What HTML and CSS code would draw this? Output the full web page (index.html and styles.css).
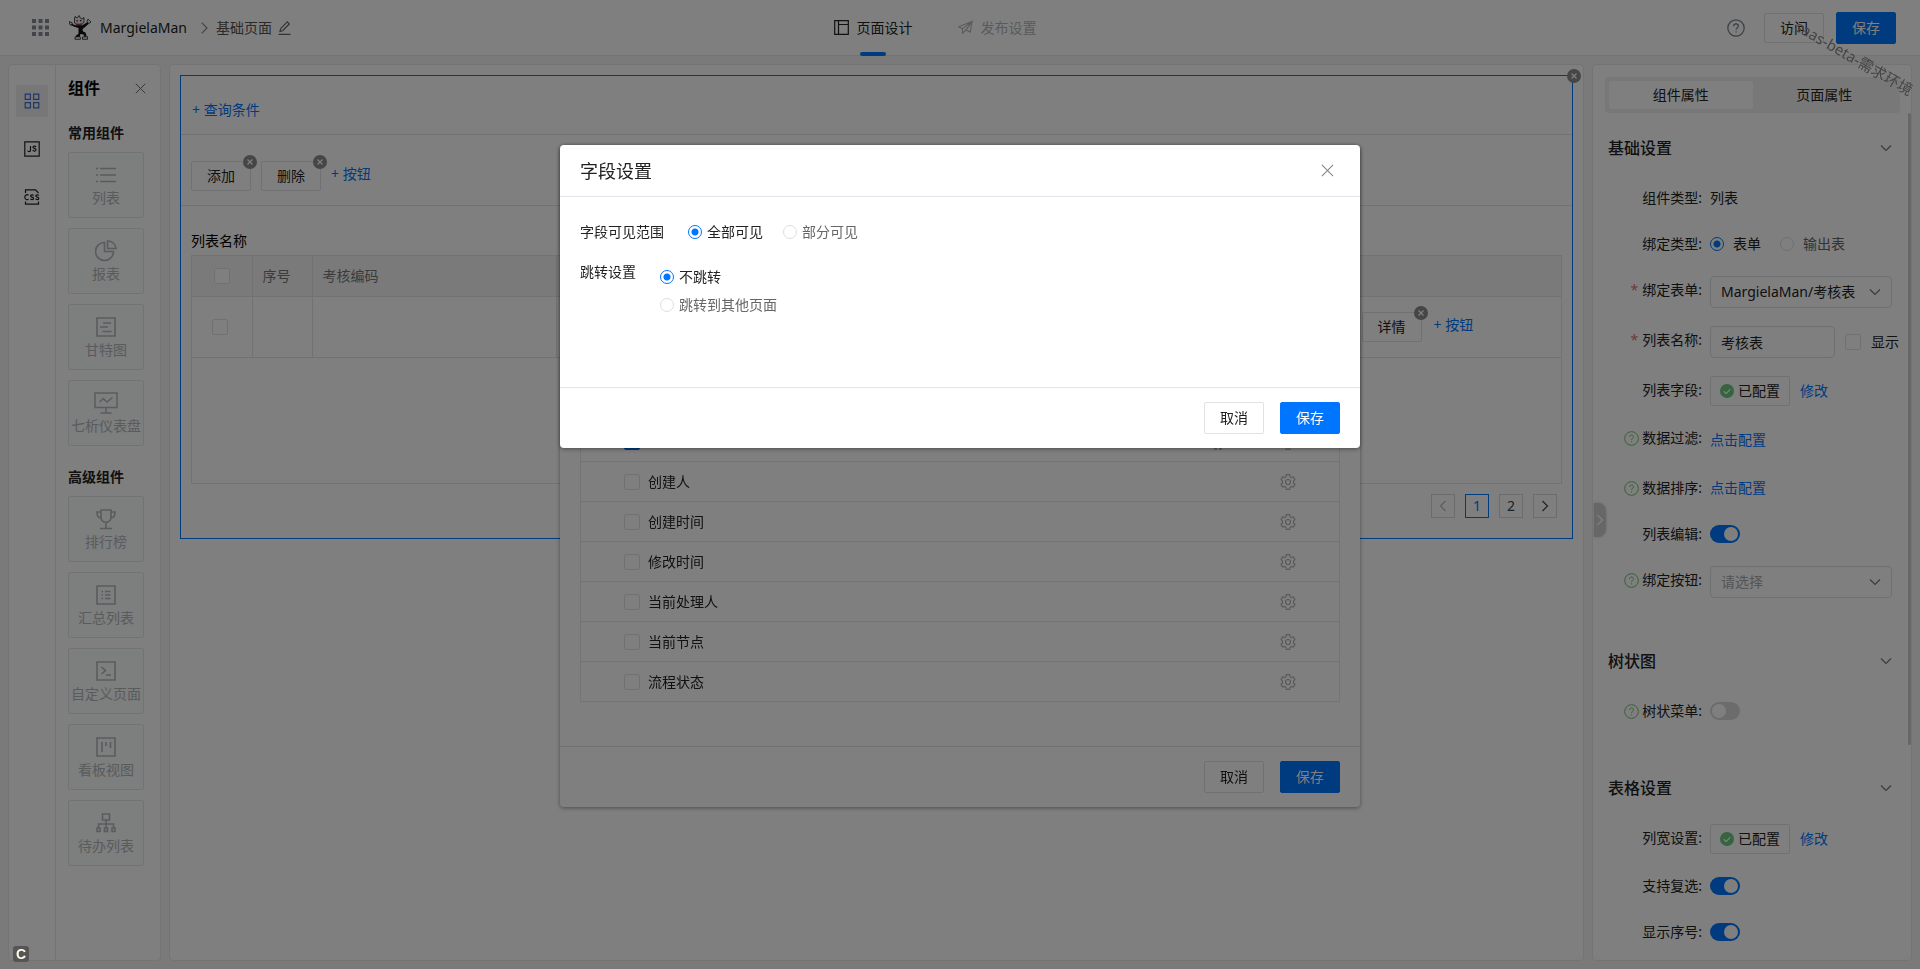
FILE: index.html
```html
<!DOCTYPE html>
<html lang="zh-CN">
<head>
<meta charset="utf-8">
<title>页面设计</title>
<link rel="stylesheet" href="styles.css">
</head>
<body>
<svg class="defs" aria-hidden="true">
  <symbol id="i-x" viewBox="0 0 14 14"><path d="M1 1l12 12M13 1L1 13"/></symbol>
  <symbol id="i-down" viewBox="0 0 12 12"><path d="M1 3.500l5 5 5-5"/></symbol>
  <symbol id="i-right" viewBox="0 0 12 12"><path d="M3.500 1l5 5-5 5"/></symbol>
  <symbol id="i-left" viewBox="0 0 12 12"><path d="M8.500 1l-5 5 5 5"/></symbol>
  <symbol id="i-badge" viewBox="0 0 14 14"><circle class="disc" cx="7" cy="7" r="7"/><path class="mark" d="M4.500 4.500l5 5M9.500 4.500l-5 5"/></symbol>
  <symbol id="i-help" viewBox="0 0 18 18"><circle cx="9" cy="9" r="8.200"/><path d="M6.600 7.200c0-1.400 1-2.400 2.400-2.400s2.400.9 2.400 2.200c0 1.700-2.300 1.900-2.300 3.700M9.100 12.200v1.400"/></symbol>
  <symbol id="i-ok" viewBox="0 0 14 14"><circle class="disc" cx="7" cy="7" r="7"/><path class="mark" d="M3.700 7.300l2.400 2.300 4.200-4.500"/></symbol>
  <symbol id="i-gear" viewBox="0 0 16 16"><path d="M6.400.7h3.200l.5 2 1.300.8 2-.6 1.600 2.800-1.500 1.400v1.800l1.500 1.400-1.600 2.800-2-.6-1.300.8-.5 2H6.400l-.5-2-1.300-.8-2 .6L1 10.300l1.500-1.400V7.100L1 5.700l1.600-2.800 2 .6 1.300-.8z"/><circle cx="8" cy="8" r="2.500"/></symbol>
</svg>

<div class="app">
  <header class="topbar">
    <div class="crumbs">
      <svg class="apps" viewBox="0 0 17 17"><path d="M0 0h4v4H0zM6.500 0h4v4h-4zM13 0h4v4h-4zM0 6.500h4v4H0zM6.500 6.500h4v4h-4zM13 6.500h4v4h-4zM0 13h4v4H0zM6.500 13h4v4h-4zM13 13h4v4h-4z"/></svg>
      <svg class="logo" viewBox="0 0 22 25"><path d="M5.500 4L6 1.500 8 3l2-2.500 1.500 2.700L13 4l2-1.500L15 7l-2.500 3-4 .3L5.500 8z" fill="#e8e8e8" stroke="#222" stroke-width=".8"/><path d="M7.500 5.200h1.300v1.300H7.500zM11 5h1.300v1.300H11z" fill="#111"/><path d="M7 8c2 1.200 4.500 1 6-.5l-1 2.300-3.500.4z" fill="#a43a2a"/><path d="M2 8.500l4.500 1.800h7L18.500 7l1.500 1.500-5 4.500-1.500 1 .5 2.500 2.500 1 1 3.500-2 1-1-2.500-3-.5-1 3H6.500l1-2 2-1V13L6 12l-4.500-2z" fill="#111"/><path d="M.5 6.500l3 1.500-1.500 2.200L.3 9zM18 6.500l1-2.500 1.500 1.500L22 7l-2.500 1.700zM6 22l5-.6.5 2.900H6zM13.500 22l5-.4v2.700h-5z" fill="#e8e8e8" stroke="#222" stroke-width=".8"/></svg>
      <span class="brand">MargielaMan</span>
      <svg class="line crumb-sep" viewBox="0 0 7 12"><path d="M.7.7L6 6 .7 11.300"/></svg>
      <span class="page-name">基础页面</span>
      <svg class="line pen" viewBox="0 0 13 14"><path d="M.5 13.300h12M2 10.500l.6-2.800L9.300.9l2 2-6.700 6.800z"/></svg>
    </div>
    <nav class="modes">
      <a class="mode mode-on" href="#"><svg class="line" viewBox="0 0 15 15"><path d="M.7.7h13.600v13.600H.7zM4.500.7v13.600M4.500 4.500h9.800"/></svg>页面设计</a>
      <a class="mode" href="#"><svg class="line" viewBox="0 0 16 15"><path d="M15 1L.8 6.800l4 2.200L15 1l-2 11.500-4.500-2.300M4.800 9v4.500l3.700-3.300L15 1"/></svg>发布设置</a>
    </nav>
    <div class="top-actions">
      <svg class="line help-lg"><use href="#i-help"/></svg>
      <button class="btn btn-sm">访问</button>
      <button class="btn btn-primary">保存</button>
    </div>
  </header>

  <div class="workspace">
    <aside class="palette">
      <div class="rail">
        <button class="rail-btn rail-on" aria-label="组件"><svg class="line" viewBox="0 0 16 16"><path d="M1.200 1.200h5.200v5.200H1.200zM9.600 1.200h5.200v5.200H9.600zM1.200 9.600h5.200v5.200H1.200zM9.600 9.600h5.200v5.200H9.600z"/></svg></button>
        <button class="rail-btn" aria-label="JS"><svg class="line" viewBox="0 0 16 16"><path d="M.8.800h14.400v14.400H.8zM6.500 5v4.300c0 1.700-2.500 1.700-2.800.2M12 6c-.5-1.200-3-1.200-3 .2C9 7.700 12 7 12 8.600c0 1.900-2.700 1.900-3.200.4"/></svg></button>
        <button class="rail-btn" aria-label="CSS"><svg class="line" viewBox="0 0 16 16"><path d="M1.500 4V.8h10L14.500 4M1.500 12.500v2.700h13v-2.700M4.500 6.200C3.500 5.300.800 5.500.8 8.200s2.700 2.900 3.700 2M9.600 6.500c-.6-1-3-.9-3 .4C6.600 8.500 9.600 7.800 9.600 9.500c0 1.400-2.600 1.400-3.200.3M14.800 6.500c-.6-1-3-.9-3 .4 0 1.600 3 .9 3 2.600 0 1.400-2.600 1.400-3.200.3"/></svg></button>
      </div>
      <div class="parts">
        <div class="parts-head"><h2>组件</h2><button class="icon-btn" aria-label="关闭"><svg class="line x-sm"><use href="#i-x"/></svg></button></div>
        <h3>常用组件</h3>
        <div class="cards">
          <div class="card"><svg class="line" viewBox="0 0 22 22"><path d="M5 4.500h16M5 11h16M5 17.500h16M1 4.500h2M1 11h2M1 17.500h2"/></svg>列表</div>
          <div class="card"><svg class="line" viewBox="0 0 22 22"><path d="M9.500 2.500a9 9 0 1 0 9 9h-9zM12.500 1v7.500H21A8 8 0 0 0 12.500 1z"/></svg>报表</div>
          <div class="card"><svg class="line" viewBox="0 0 22 22"><path d="M2 2h18v18H2zM8 7h8M5 11h8M7.500 15.500h9"/></svg>甘特图</div>
          <div class="card"><svg class="line wide" viewBox="0 0 26 24"><path d="M1 1h24v16H1zM13 17v5M7 23h12M6 11l4-4 4 4 6-5"/></svg>七析仪表盘</div>
        </div>
        <h3>高级组件</h3>
        <div class="cards">
          <div class="card"><svg class="line" viewBox="0 0 22 22"><path d="M6 2h10v7c0 7-10 7-10 0zM6 4H2c0 4 1 6 4 6M16 4h4c0 4-1 6-4 6M11 14.500V20M5 20.500h12"/></svg>排行榜</div>
          <div class="card"><svg class="line" viewBox="0 0 22 22"><path d="M2 2h18v18H2zM6.500 7.500H8M10 7.500h5.500M6.500 11H8M10 11h5.500M6.500 14.500H8M10 14.500h5.500"/></svg>汇总列表</div>
          <div class="card"><svg class="line" viewBox="0 0 22 22"><path d="M2 2h18v18H2zM6.500 7l4 3.500-4 3.500M11 15h5"/></svg>自定义页面</div>
          <div class="card"><svg class="line" viewBox="0 0 22 22"><path d="M2 2h18v18H2zM7 6v10M11 6v4M15.500 6v6"/></svg>看板视图</div>
          <div class="card"><svg class="line" viewBox="0 0 22 22"><path d="M7.500 2h7v6h-7zM11 8v4M3.500 16v-4h15v4M11 12v4M2 16h3v3.500H2zM9.500 16h3v3.500h-3zM17 16h3v3.500h-3z"/></svg>待办列表</div>
        </div>
      </div>
    </aside>

    <main class="canvas">
      <section class="block">
        <svg class="badge badge-block"><use href="#i-badge"/></svg>
        <div class="query"><a class="add" href="#">+ 查询条件</a></div>
        <div class="tools">
          <div class="tool"><button class="btn btn-sm">添加</button><svg class="badge"><use href="#i-badge"/></svg></div>
          <div class="tool"><button class="btn btn-sm">删除</button><svg class="badge"><use href="#i-badge"/></svg></div>
          <a class="add" href="#">+ 按钮</a>
        </div>
        <div class="list">
          <div class="list-title">列表名称</div>
          <div class="grid-box">
            <table>
              <colgroup><col class="c-sm"><col class="c-sm"><col class="c-md"><col><col><col><col class="c-act"></colgroup>
              <thead><tr><th class="pick"><input type="checkbox" aria-label="全选"></th><th>序号</th><th>考核编码</th><th></th><th></th><th></th><th></th></tr></thead>
              <tbody><tr><td class="pick"><input type="checkbox" aria-label="选择行"></td><td></td><td></td><td></td><td></td><td></td>
                <td><div class="row-tools"><div class="tool"><button class="btn btn-sm">详情</button><svg class="badge"><use href="#i-badge"/></svg></div><a class="add" href="#">+ 按钮</a></div></td></tr></tbody>
            </table>
          </div>
          <div class="pager">
            <button class="pg pg-off" aria-label="上一页"><svg class="line"><use href="#i-left"/></svg></button>
            <button class="pg pg-on">1</button>
            <button class="pg">2</button>
            <button class="pg" aria-label="下一页"><svg class="line"><use href="#i-right"/></svg></button>
          </div>
        </div>
      </section>
    </main>

    <aside class="props">
      <button class="collapse" aria-label="收起"><svg class="line"><use href="#i-right"/></svg></button>
      <div class="seg"><button class="seg-btn seg-on">组件属性</button><button class="seg-btn">页面属性</button></div>
      <div class="props-body">
        <section class="group">
          <h2>基础设置<svg class="line chev"><use href="#i-down"/></svg></h2>
          <div class="field"><span class="label">组件类型:</span><span class="value">列表</span></div>
          <div class="field"><span class="label">绑定类型:</span><span class="value radios"><label><input type="radio" name="bind" checked>表单</label><label class="off"><input type="radio" name="bind">输出表</label></span></div>
          <div class="field tall"><label class="label" for="form"><b class="req">*</b>绑定表单:</label><span class="value"><span class="select"><select id="form"><option>MargielaMan/考核表</option></select><svg class="line chev"><use href="#i-down"/></svg></span></span></div>
          <div class="field tall"><label class="label" for="name"><b class="req">*</b>列表名称:</label><span class="value"><input class="text" id="name" type="text" value="考核表"><label class="show"><input type="checkbox">显示</label></span></div>
          <div class="field mid"><span class="label">列表字段:</span><span class="value"><button class="btn btn-sm done"><svg class="ok"><use href="#i-ok"/></svg>已配置</button><a href="#">修改</a></span></div>
          <div class="field tall"><span class="label"><svg class="line tip"><use href="#i-help"/></svg>数据过滤:</span><span class="value"><a href="#">点击配置</a></span></div>
          <div class="field"><span class="label"><svg class="line tip"><use href="#i-help"/></svg>数据排序:</span><span class="value"><a href="#">点击配置</a></span></div>
          <div class="field"><label class="label" for="edit">列表编辑:</label><span class="value"><input class="switch" id="edit" type="checkbox" checked></span></div>
          <div class="field tall"><label class="label" for="bindbtn"><svg class="line tip"><use href="#i-help"/></svg>绑定按钮:</label><span class="value"><span class="select empty"><select id="bindbtn"><option>请选择</option></select><svg class="line chev"><use href="#i-down"/></svg></span></span></div>
        </section>
        <section class="group">
          <h2>树状图<svg class="line chev"><use href="#i-down"/></svg></h2>
          <div class="field"><label class="label" for="tree"><svg class="line tip"><use href="#i-help"/></svg>树状菜单:</label><span class="value"><input class="switch" id="tree" type="checkbox"></span></div>
        </section>
        <section class="group">
          <h2>表格设置<svg class="line chev"><use href="#i-down"/></svg></h2>
          <div class="field mid"><span class="label">列宽设置:</span><span class="value"><button class="btn btn-sm done"><svg class="ok"><use href="#i-ok"/></svg>已配置</button><a href="#">修改</a></span></div>
          <div class="field"><label class="label" for="multi">支持复选:</label><span class="value"><input class="switch" id="multi" type="checkbox" checked></span></div>
          <div class="field"><label class="label" for="seq">显示序号:</label><span class="value"><input class="switch" id="seq" type="checkbox" checked></span></div>
        </section>
      </div>
      <div class="thumb"></div>
    </aside>
  </div>
</div>

<div class="watermark">saas-beta-需求环境</div>

<div class="layer">
  <div class="dialog dialog-fields" role="dialog" aria-label="列表字段">
    <div class="dialog-body">
      <ul class="fields">
        <li><input type="checkbox" checked aria-label="已选字段"><svg class="grip" viewBox="0 0 8 16"><path d="M0 1h3v3H0zM5 1h3v3H5zM0 7h3v3H0zM5 7h3v3H5zM0 13h3v3H0zM5 13h3v3H5z"/></svg><svg class="line gear"><use href="#i-gear"/></svg></li>
        <li><label><input type="checkbox">创建人</label><svg class="line gear"><use href="#i-gear"/></svg></li>
        <li><label><input type="checkbox">创建时间</label><svg class="line gear"><use href="#i-gear"/></svg></li>
        <li><label><input type="checkbox">修改时间</label><svg class="line gear"><use href="#i-gear"/></svg></li>
        <li><label><input type="checkbox">当前处理人</label><svg class="line gear"><use href="#i-gear"/></svg></li>
        <li><label><input type="checkbox">当前节点</label><svg class="line gear"><use href="#i-gear"/></svg></li>
        <li><label><input type="checkbox">流程状态</label><svg class="line gear"><use href="#i-gear"/></svg></li>
      </ul>
    </div>
    <div class="dialog-foot"><button class="btn">取消</button><button class="btn btn-primary">保存</button></div>
  </div>
</div>

<div class="layer mask">
  <div class="dialog" role="dialog" aria-labelledby="dlg">
    <div class="dialog-head"><h1 id="dlg">字段设置</h1><button class="icon-btn" aria-label="关闭"><svg class="line x-lg"><use href="#i-x"/></svg></button></div>
    <div class="dialog-body form">
      <div class="form-row"><span>字段可见范围</span><div class="opts"><label><input type="radio" name="scope" checked>全部可见</label><label class="off"><input type="radio" name="scope">部分可见</label></div></div>
      <div class="form-row"><span>跳转设置</span><div class="opts opts-col"><label><input type="radio" name="jump" checked>不跳转</label><label class="off"><input type="radio" name="jump">跳转到其他页面</label></div></div>
    </div>
    <div class="dialog-foot"><button class="btn">取消</button><button class="btn btn-primary">保存</button></div>
  </div>
</div>
<div class="corner">C</div>
</body>
</html>
```

FILE: styles.css
```css
* { box-sizing: border-box; }
body { margin: 0; overflow: hidden; background: #f5f5f5; color: #222; font: 14px/22px "Noto Sans", "Noto Sans CJK SC", sans-serif; }
h1, h2, h3, ul { margin: 0; padding: 0; font-weight: 400; list-style: none; }
a { color: #0075ff; text-decoration: none; }
button, input, select { font: inherit; color: inherit; margin: 0; }
svg { flex: none; }
.defs { position: absolute; width: 0; height: 0; }
.line { fill: none; stroke: currentColor; stroke-width: 1.2; }
label { display: flex; align-items: center; }

input[type="checkbox"]:not(.switch) { appearance: none; flex: none; width: 16px; height: 16px; border: 1px solid #e1e2e6; border-radius: 2px; background: #fff; }
input[type="checkbox"]:not(.switch):checked { background: #0075ff; border-color: #0075ff; }
input[type="radio"] { appearance: none; flex: none; width: 14px; height: 14px; border: 1px solid #dcdee2; border-radius: 50%; background: #fff; }
input[type="radio"]:checked { border-color: #0075ff; background: radial-gradient(circle, #0075ff 3px, #fff 4px); }
.off { color: #666; }

.btn { min-width: 60px; height: 32px; padding: 0 15px; border: 1px solid #e1e2e6; border-radius: 2px; background: #fff; line-height: 20px; white-space: nowrap; }
.btn-sm { height: 30px; }
.btn-primary { background: #0075ff; border-color: #0075ff; color: #fff; }
.icon-btn { display: flex; padding: 0; border: 0; background: none; color: #666; }
.x-sm { width: 11px; height: 11px; }
.x-lg { width: 13px; height: 13px; color: #888; }
.badge { position: absolute; top: -6px; right: -6px; width: 14px; height: 14px; }
.badge-block { top: -7px; right: -9px; }
.disc { fill: #8c8c8c; }
.mark { fill: none; stroke: #fff; stroke-width: 1.2; }

.app { display: flex; flex-direction: column; height: 100vh; }
.topbar { display: grid; grid-template-columns: 1fr auto 1fr; flex: none; height: 56px; padding: 0 24px 0 32px; background: #fff; border-bottom: 1px solid #e6e6e6; }
.crumbs, .top-actions { display: flex; align-items: center; }
.apps { width: 17px; height: 17px; fill: #858a92; margin-right: 20px; }
.logo { width: 22px; height: 25px; margin-right: 9px; }
.crumb-sep { width: 7px; height: 12px; margin: 0 8px 0 14px; color: #888; }
.page-name { color: #555; }
.pen { width: 13px; height: 14px; margin-left: 6px; color: #666; }
.modes { display: flex; gap: 45px; margin-right: 58px; }
.mode { position: relative; display: flex; align-items: center; gap: 8px; color: #b4b6ba; }
.mode svg { width: 15px; height: 15px; }
.mode-on { color: #222; }
.mode-on::after { content: ""; position: absolute; left: 50%; bottom: -1px; width: 26px; height: 4px; margin-left: -13px; border-radius: 2px; background: #0075ff; }
.top-actions { justify-content: flex-end; }
.help-lg { width: 18px; height: 18px; margin-right: 19px; color: #777e88; }
.top-actions .btn-primary { margin-left: 12px; }

.workspace { display: flex; flex: 1; min-height: 0; gap: 8px; padding: 8px; }
.palette { display: flex; flex: none; width: 153px; border: 1px solid #e8e8e8; border-radius: 4px; background: #fff; }
.rail { display: flex; flex-direction: column; align-items: center; gap: 16px; width: 47px; padding-top: 20px; border-right: 1px solid #e8e8e8; }
.rail-btn { display: flex; align-items: center; justify-content: center; width: 32px; height: 32px; padding: 0; border: 0; border-radius: 2px; background: none; }
.rail-btn svg { width: 16px; height: 16px; }
.rail-on { background: #efefef; color: #3f6fd8; }
.parts { flex: 1; padding: 11px 14px 0 12px; }
.parts-head { display: flex; align-items: center; justify-content: space-between; height: 24px; }
.parts h2 { font-size: 16px; font-weight: 700; color: #000; }
.parts h3 { margin: 20px 0 8px; font-size: 14px; font-weight: 700; }
.parts-head + h3 { margin-top: 22px; }
.cards { display: grid; gap: 10px; }
.card { display: flex; flex-direction: column; align-items: center; justify-content: center; width: 76px; height: 66px; padding-top: 2px; border: 1px solid #e4e6e8; border-radius: 2px; background: #fafcfc; color: #b4b6ba; white-space: nowrap; }
.card svg { width: 22px; height: 22px; stroke-width: 1.6; margin-bottom: 1px; }
.card .wide { width: 26px; }

.canvas { flex: 1; min-width: 0; padding: 10px; border: 1px solid #e8e8e8; border-radius: 4px; background: #fff; }
.block { position: relative; border: 1px solid #0075ff; }
.query { padding: 23px 11px 13px; border-bottom: 1px solid #e4e4e4; }
.tools { display: flex; gap: 10px; height: 71px; padding: 26px 10px 0; border-bottom: 1px solid #e4e4e4; }
.tool { position: relative; }
.tools .add { line-height: 26px; }
.list { padding: 24px 10px 20px; }
.list-title { margin-bottom: 3px; color: #000; }
.grid-box { height: 229px; border: 1px solid #e4e4e4; }
table { width: 100%; border-collapse: collapse; table-layout: fixed; }
.c-sm { width: 60px; }
.c-md { width: 244px; }
.c-act { width: 210px; }
th, td { padding: 0 10px; border-right: 1px solid #e4e4ea; border-bottom: 1px solid #e4e4ea; text-align: left; font-weight: 400; }
th:last-child, td:last-child { border-right: 0; }
th { height: 40px; background: #f5f5f5; color: #777; }
td { height: 61px; }
.pick { text-align: center; line-height: 0; }
td.pick { padding-right: 14px; }
.row-tools { display: flex; gap: 12px; }
.row-tools .add { line-height: 26px; }
.pager { display: flex; justify-content: flex-end; gap: 10px; padding: 10px 5px 0; }
.pg { display: flex; align-items: center; justify-content: center; width: 24px; height: 24px; padding: 0; border: 1px solid #d9d9d9; background: #fff; color: #444; }
.pg svg { width: 12px; height: 12px; }
.pg-on { border-color: #0075ff; color: #0075ff; }
.pg-off { color: #bbb; }

.props { position: relative; flex: none; width: 320px; padding: 12px 11px 0 12px; border: 1px solid #e8e8e8; border-radius: 4px; background: #fff; overflow: hidden; }
.collapse { position: absolute; left: 1px; top: 438px; display: flex; align-items: center; justify-content: flex-end; width: 12px; height: 34px; padding: 0; border: 0; border-radius: 0 8px 8px 0; background: #cdced2; color: #fff; box-shadow: 0 0 3px #ccc; }
.collapse svg { width: 12px; height: 12px; }
.thumb { position: absolute; top: 48px; right: 0; width: 3px; height: 632px; border-radius: 2px; background: #cecece; }
.seg { display: flex; padding: 4px; border-radius: 4px; background: #f0f0f0; }
.seg-btn { flex: 1; height: 28px; padding: 0; border: 0; border-radius: 3px; background: none; }
.seg-on { background: #fff; }
.props-body { padding: 22px 8px 0 3px; }
.group { display: grid; grid-template-columns: minmax(0, 1fr); gap: 14px; margin-bottom: 48px; }
.group h2 { display: flex; align-items: center; justify-content: space-between; height: 26px; margin-bottom: 7px; font-size: 16px; font-weight: 500; }
.chev { width: 12px; height: 12px; color: #777; }
.field { display: flex; gap: 8px; min-height: 32px; }
.mid { min-height: 34px; }
.tall { min-height: 36px; }
.label { display: flex; flex: none; align-items: center; justify-content: flex-end; width: 94px; height: 32px; }
.value { display: flex; flex: 1; align-items: center; gap: 10px; min-width: 0; white-space: nowrap; }
.req { margin-right: 4px; font-weight: 400; color: #e57373; }
.tip { width: 15px; height: 15px; margin-right: 3px; color: #6cc070; }
.radios { gap: 19px; }
.radios label { gap: 9px; }
.select { position: relative; width: 182px; }
.select select { appearance: none; width: 100%; height: 32px; padding: 0 28px 0 10px; border: 1px solid #dcdee2; border-radius: 4px; background: #fff; }
.select .chev { position: absolute; right: 11px; top: 10px; pointer-events: none; }
.empty select { color: #aaa; }
.text { flex: none; width: 125px; height: 32px; padding: 0 10px; border: 1px solid #dcdee2; border-radius: 4px; }
.show { gap: 10px; }
.done { display: flex; align-items: center; gap: 4px; width: 80px; padding: 0 9px; }
.ok { width: 14px; height: 14px; }
#i-ok .disc { fill: #6cc880; }
.switch { position: relative; appearance: none; width: 30px; height: 18px; border-radius: 9px; background: #d8d8d8; }
.switch::after { content: ""; position: absolute; left: 2px; top: 2px; width: 14px; height: 14px; border-radius: 50%; background: #fff; }
.switch:checked { background: #0075ff; }
.switch:checked::after { left: 14px; }

.watermark { position: fixed; right: -2px; top: 47px; width: 134px; font-size: 15px; color: #8a8a8a; white-space: nowrap; transform: rotate(30deg); }

.layer { position: fixed; inset: 0; display: flex; justify-content: center; align-items: flex-start; padding-top: 145px; }
.mask { background: rgba(0, 0, 0, .5); }
.dialog { width: 800px; border-radius: 4px; background: #fff; box-shadow: 0 1px 4px rgba(0, 0, 0, .4); }
.dialog-head { display: flex; align-items: center; justify-content: space-between; height: 52px; padding: 0 26px 0 20px; border-bottom: 1px solid #e4e4ea; }
.dialog-head h1 { font-size: 18px; line-height: 26px; color: #222; }
.dialog-foot { display: flex; justify-content: flex-end; gap: 16px; padding: 14px 20px; border-top: 1px solid #e4e4ea; }
.form { display: grid; align-content: start; gap: 18px; min-height: 190px; padding: 24px 20px; }
.form-row { display: flex; gap: 24px; }
.opts { display: flex; gap: 20px; }
.opts label { gap: 5px; }
.opts-col { flex-direction: column; gap: 6px; padding-top: 5px; }
.dialog-fields .dialog-body { display: flex; flex-direction: column; justify-content: flex-end; min-height: 601px; padding: 0 20px 44px; }
.fields { border: 1px solid #e8e8e8; border-bottom: 0; }
.fields li { display: flex; align-items: center; height: 40px; padding: 0 43px; border-bottom: 1px solid #e8e8e8; }
.fields label { gap: 8px; }
.gear { width: 16px; height: 16px; margin-left: auto; color: #b4b4b4; }
.grip { width: 8px; height: 16px; margin-left: auto; fill: #bbb; }
.grip + .gear { margin-left: 58px; }
.corner { position: fixed; left: 13px; bottom: 7px; width: 16px; height: 16px; border-radius: 3px; background: #555; color: #fffbe8; font: 700 14px/16px "Liberation Sans", sans-serif; text-align: center; }
```
